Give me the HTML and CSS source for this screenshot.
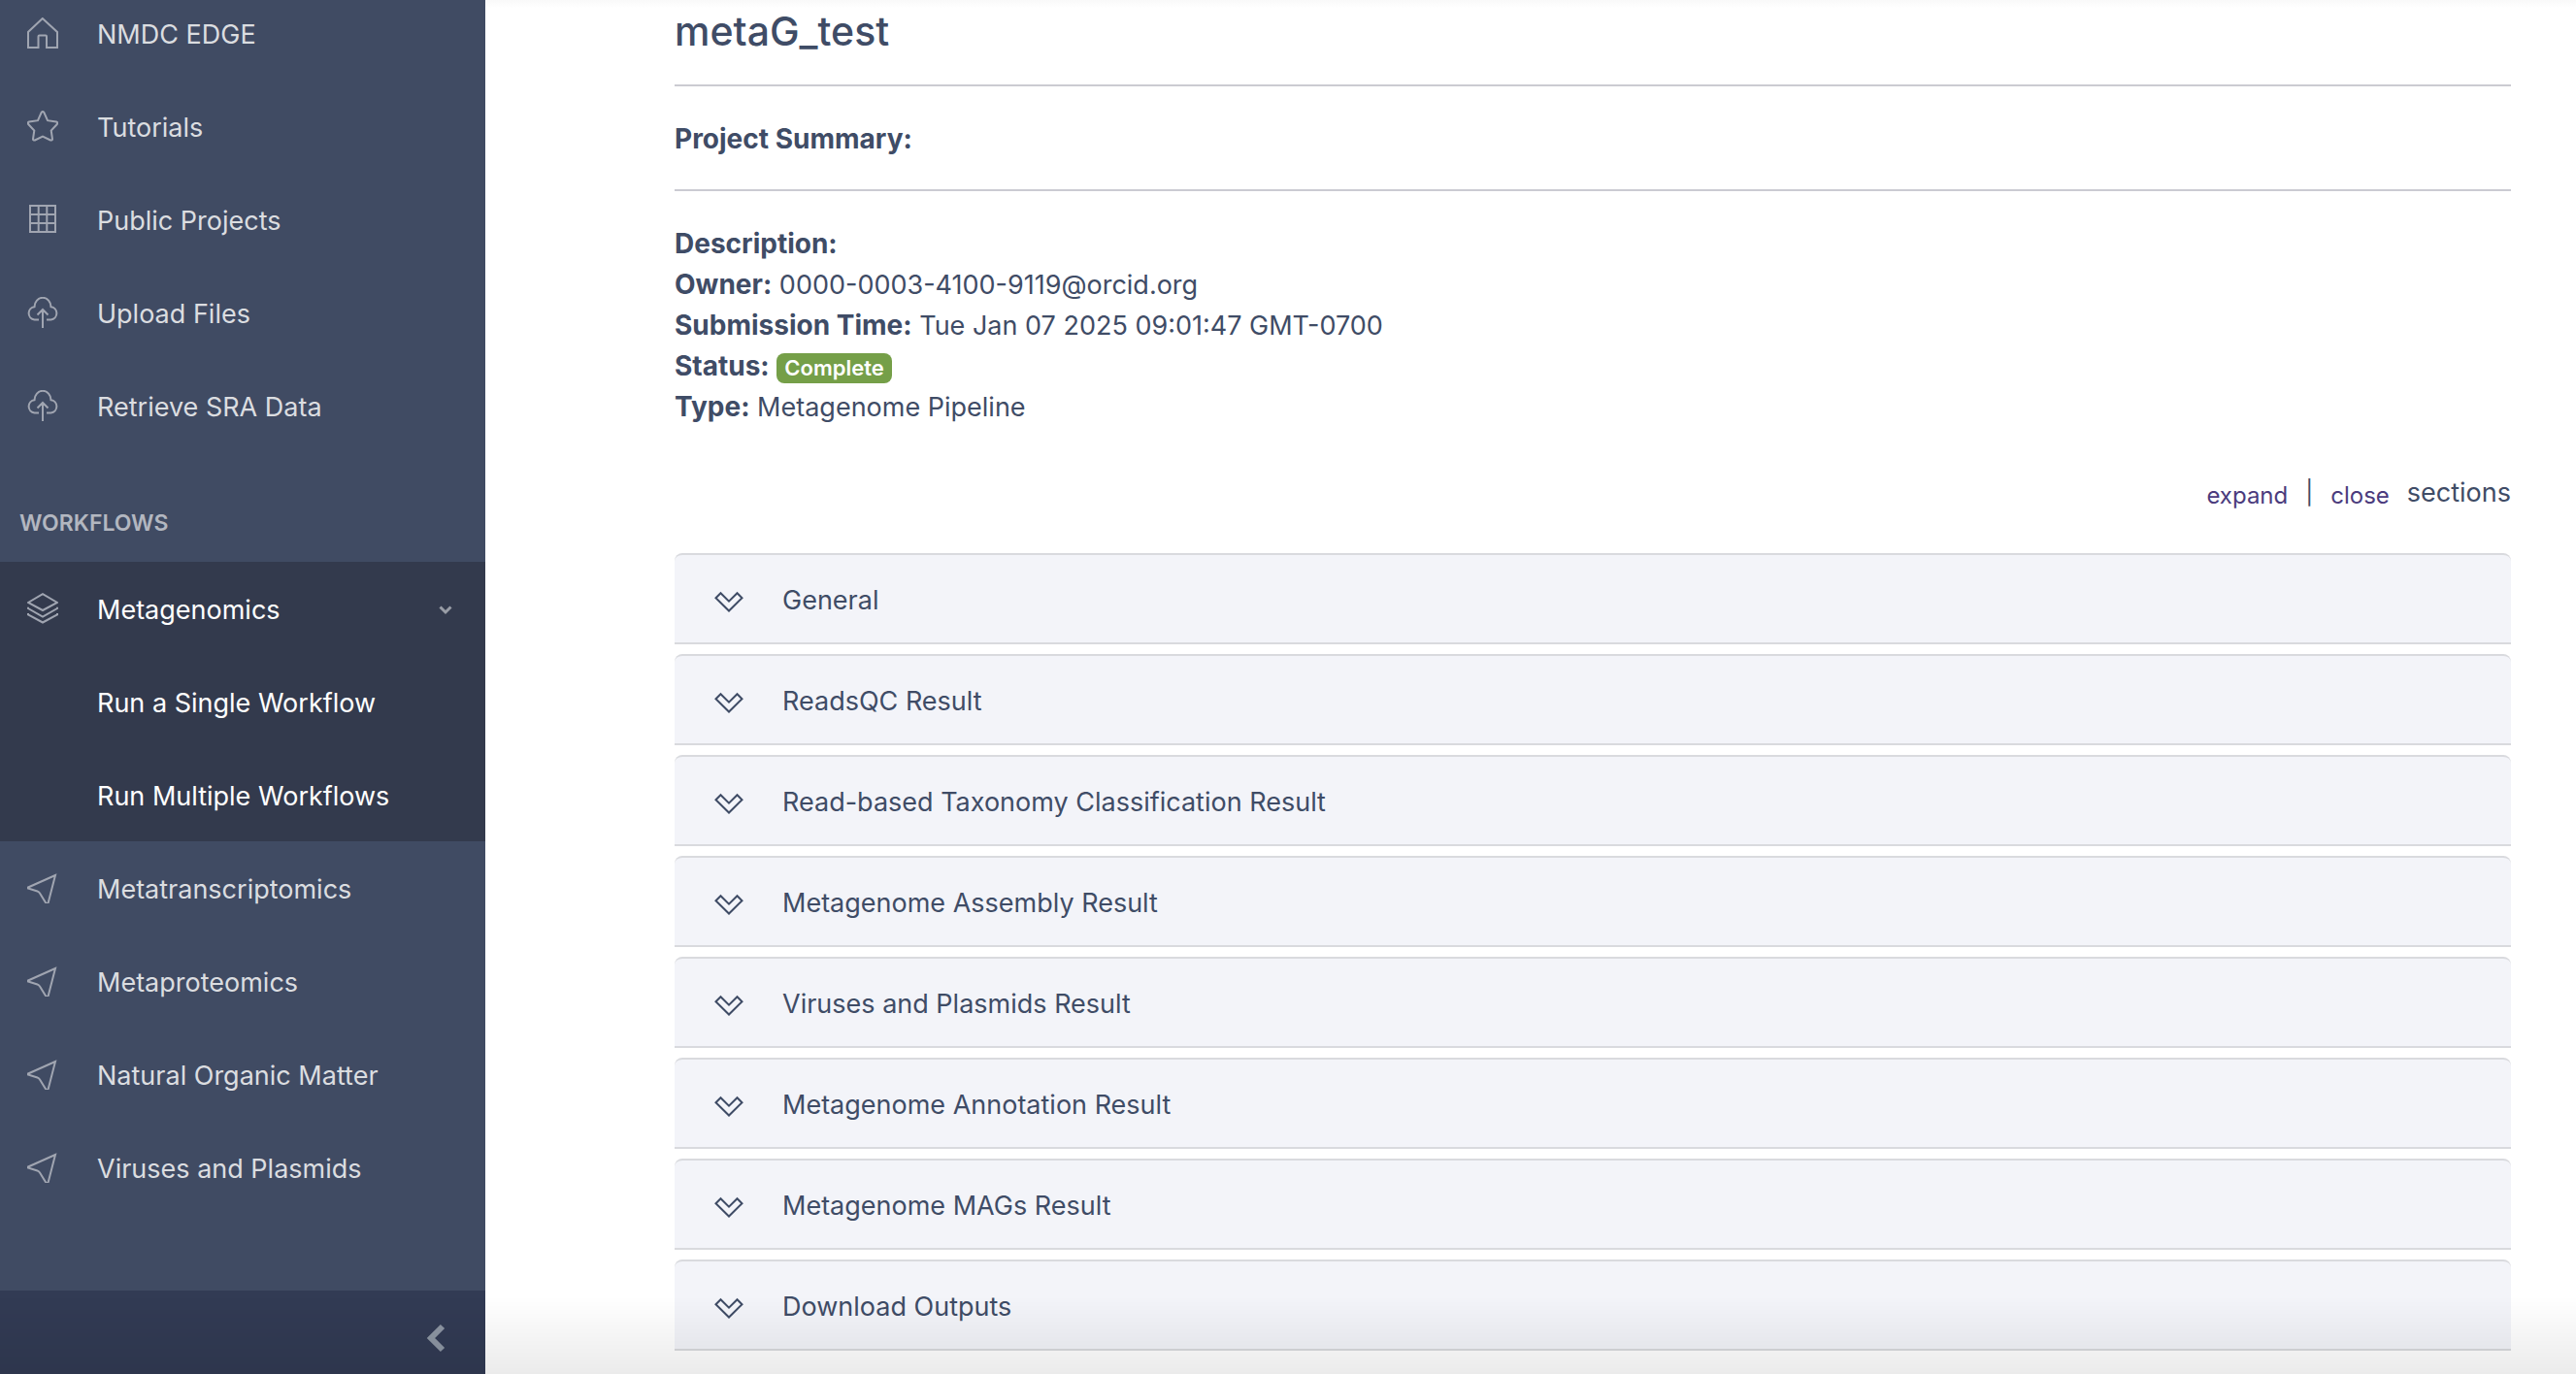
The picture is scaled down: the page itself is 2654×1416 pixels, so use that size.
FILE: index.html
```html
<!DOCTYPE html>
<html lang="en">
<head>
<meta charset="utf-8">
<title>NMDC EDGE - metaG_test</title>
<link rel="stylesheet" href="styles.css">
</head>
<body>
<svg class="sprite" aria-hidden="true">
  <symbol id="i-home" viewBox="0 0 32 32"><path d="M1 31V15L15.800 1 31 15V31H20V19.500Q20 18.500 19 18.500H12.500Q11.500 18.500 11.500 19.500V31Z"/></symbol>
  <symbol id="i-star" viewBox="0 0 32 32"><path d="M14.700 1.800Q16 .2 17.300 1.800L21 10.200 30 11.500Q32 12.300 30.800 14L24.700 20.500 26 29.300Q25.800 31 24 30.500L16 26.500 8 30.500Q6.200 31 6 29.300L7.300 20.500 1.200 14Q0 12.300 2 11.500L11 10.200Z"/></symbol>
  <symbol id="i-grid" viewBox="0 0 32 32"><path d="M3 2H29V29H3ZM3 11H29M3 20H29M11.700 2V29M20.300 2V29"/></symbol>
  <symbol id="i-cloud" viewBox="0 0 32 32"><path d="M12 23.500H7.500A6.700 6.700 0 0 1 7.500 10.200A8.500 9.400 0 0 1 24.500 10.200A6.700 6.700 0 0 1 24.500 23.500H20M16 32V13M10.500 18.500 16 13 21.500 18.500"/></symbol>
  <symbol id="i-layers" viewBox="0 0 32 32"><path d="M1 10 16 1.200 31 10 16 18ZM1 14.800V16L16 24.500 31 16V14.800M1 21V22.500L16 30.500 31 22.500V21"/></symbol>
  <symbol id="i-send" viewBox="0 0 32 32"><path d="M29 3 1 15.500V16.500L10.500 19.500Q12 20 13 21.500L19.500 32H21.500Z"/></symbol>
  <symbol id="i-down" viewBox="0 0 30 22"><path d="M1.500 7.200 6.500 2.200 15 10.700 23.500 2.200 28.500 7.200 15 20.500Z"/></symbol>
</svg>
<div class="app">
  <aside class="sidebar">
    <nav class="nav">
      <a class="nav-link" href="#"><svg class="icon"><use href="#i-home"/></svg>NMDC EDGE</a>
      <a class="nav-link" href="#"><svg class="icon"><use href="#i-star"/></svg>Tutorials</a>
      <a class="nav-link" href="#"><svg class="icon"><use href="#i-grid"/></svg>Public Projects</a>
      <a class="nav-link" href="#"><svg class="icon"><use href="#i-cloud"/></svg>Upload Files</a>
      <a class="nav-link" href="#"><svg class="icon"><use href="#i-cloud"/></svg>Retrieve SRA Data</a>
      <h2 class="nav-title">WORKFLOWS</h2>
      <div class="nav-group">
        <button class="nav-link" type="button" aria-expanded="true"><svg class="icon"><use href="#i-layers"/></svg>Metagenomics<svg class="caret" viewBox="0 0 14 10"><path d="M1.500 1.500 7 7 12.500 1.500"/></svg></button>
        <a class="nav-link nav-sub" href="#">Run a Single Workflow</a>
        <a class="nav-link nav-sub" href="#">Run Multiple Workflows</a>
      </div>
      <a class="nav-link" href="#"><svg class="icon"><use href="#i-send"/></svg>Metatranscriptomics</a>
      <a class="nav-link" href="#"><svg class="icon"><use href="#i-send"/></svg>Metaproteomics</a>
      <a class="nav-link" href="#"><svg class="icon"><use href="#i-send"/></svg>Natural Organic Matter</a>
      <a class="nav-link" href="#"><svg class="icon"><use href="#i-send"/></svg>Viruses and Plasmids</a>
    </nav>
    <button class="minimizer" type="button" aria-label="Collapse sidebar"><svg viewBox="0 0 20 30"><path d="M16 3 4 15 16 27"/></svg></button>
  </aside>
  <main class="main">
    <h1 class="title">metaG_test</h1>
    <hr>
    <p class="line"><b>Project Summary:</b></p>
    <hr>
    <div class="summary">
      <p class="line"><b>Description:</b></p>
      <p class="line"><b>Owner:</b> 0000-0003-4100-9119@orcid.org</p>
      <p class="line"><b>Submission Time:</b> Tue Jan 07 2025 09:01:47 GMT-0700</p>
      <p class="line"><b>Status:</b> <span class="badge">Complete</span></p>
      <p class="line"><b>Type:</b> Metagenome Pipeline</p>
    </div>
    <div class="toggles">
      <button class="text-btn" type="button">expand</button><span class="divider">|</span><button class="text-btn" type="button">close</button><span>sections</span>
    </div>
    <div class="panels">
      <button class="panel" type="button"><svg class="down"><use href="#i-down"/></svg>General</button>
      <button class="panel" type="button"><svg class="down"><use href="#i-down"/></svg>ReadsQC Result</button>
      <button class="panel" type="button"><svg class="down"><use href="#i-down"/></svg>Read-based Taxonomy Classification Result</button>
      <button class="panel" type="button"><svg class="down"><use href="#i-down"/></svg>Metagenome Assembly Result</button>
      <button class="panel" type="button"><svg class="down"><use href="#i-down"/></svg>Viruses and Plasmids Result</button>
      <button class="panel" type="button"><svg class="down"><use href="#i-down"/></svg>Metagenome Annotation Result</button>
      <button class="panel" type="button"><svg class="down"><use href="#i-down"/></svg>Metagenome MAGs Result</button>
      <button class="panel" type="button"><svg class="down"><use href="#i-down"/></svg>Download Outputs</button>
    </div>
  </main>
</div>
</body>
</html>
```
FILE: styles.css
```css
* { box-sizing: border-box; }
body {
  margin: 0;
  background: #fff;
  color: #3f4c66;
  font: 27px/42px Inter, "Liberation Sans", sans-serif;
}
h1, h2, p { margin: 0; }
button {
  border: 0;
  background: none;
  color: inherit;
  font: inherit;
  text-align: left;
  cursor: pointer;
}
svg { display: block; fill: none; stroke: currentColor; flex: none; }
.sprite { width: 0; height: 0; position: absolute; }

.app { display: flex; min-height: 100vh; }

/* shade along the bottom edge of the window */
.app::after {
  content: "";
  position: fixed;
  inset: auto 0 0 0;
  height: 80px;
  background: linear-gradient(rgba(0, 0, 0, 0), rgba(0, 0, 0, .08));
  pointer-events: none;
}

.sidebar {
  display: flex;
  flex-direction: column;
  flex: none;
  width: 500px;
  background: #404b63;
  color: #dbdde0;
}
.nav { flex: 1; margin-top: -14px; }
.nav-link {
  display: flex;
  align-items: center;
  gap: 40px;
  width: 100%;
  height: 96px;
  padding: 3px 34px 0 28px;
  color: inherit;
  text-decoration: none;
}
.icon { width: 32px; height: 32px; margin-bottom: 3px; overflow: visible; color: #a0a5b1; stroke-width: 2; }
.nav-title {
  height: 113px;
  padding: 52px 20px 0;
  color: #b3b7c0;
  font-size: 23px;
  line-height: 42px;
  font-weight: 600;
}
.nav-group { background: #333a4d; color: #fff; }
.nav-sub { padding-left: 100px; }
.caret { width: 14px; height: 10px; margin-left: auto; color: #999da6; stroke-width: 3; }
.minimizer {
  display: flex;
  align-items: center;
  justify-content: flex-end;
  height: 86px;
  padding: 12px 40px 0;
  background: #323b54;
  color: #8d96a3;
}
.minimizer svg { width: 20px; height: 30px; stroke-width: 6; }

.main {
  flex: 1;
  padding: 2px 67px 24px 195px;
  background: linear-gradient(#f9f9f9, #fff 8px);
}
.title { font-size: 41px; line-height: 60px; font-weight: 500; }
hr { height: 2px; margin: 32px 0; border: 0; background: #cbcbd2; }
.title + hr { margin-top: 25px; }
.line { height: 42px; padding-top: 3px; line-height: 39px; }
.line b { font-size: 28px; }
.badge {
  display: inline-block;
  padding: 0 8px;
  border-radius: 8px;
  background: #759f48;
  color: #fff;
  font-size: 22px;
  line-height: 31px;
  font-weight: 600;
}
.toggles {
  display: flex;
  justify-content: flex-end;
  align-items: center;
  margin: 48px 0 41px;
}
.text-btn { padding: 5px 18px 0; color: #4b3b7d; font-size: 24px; line-height: 37px; }
.divider { font-size: 24px; }
.panels { display: flex; flex-direction: column; gap: 10px; }
.panel {
  display: flex;
  align-items: center;
  gap: 40px;
  height: 94px;
  padding: 3px 41px 0;
  border: solid #d9dade;
  border-width: 2px 0;
  border-radius: 8px 8px 0 0;
  background: #f3f4f9;
}
.down { width: 30px; height: 22px; margin-top: 3px; stroke-width: 2; }
```
